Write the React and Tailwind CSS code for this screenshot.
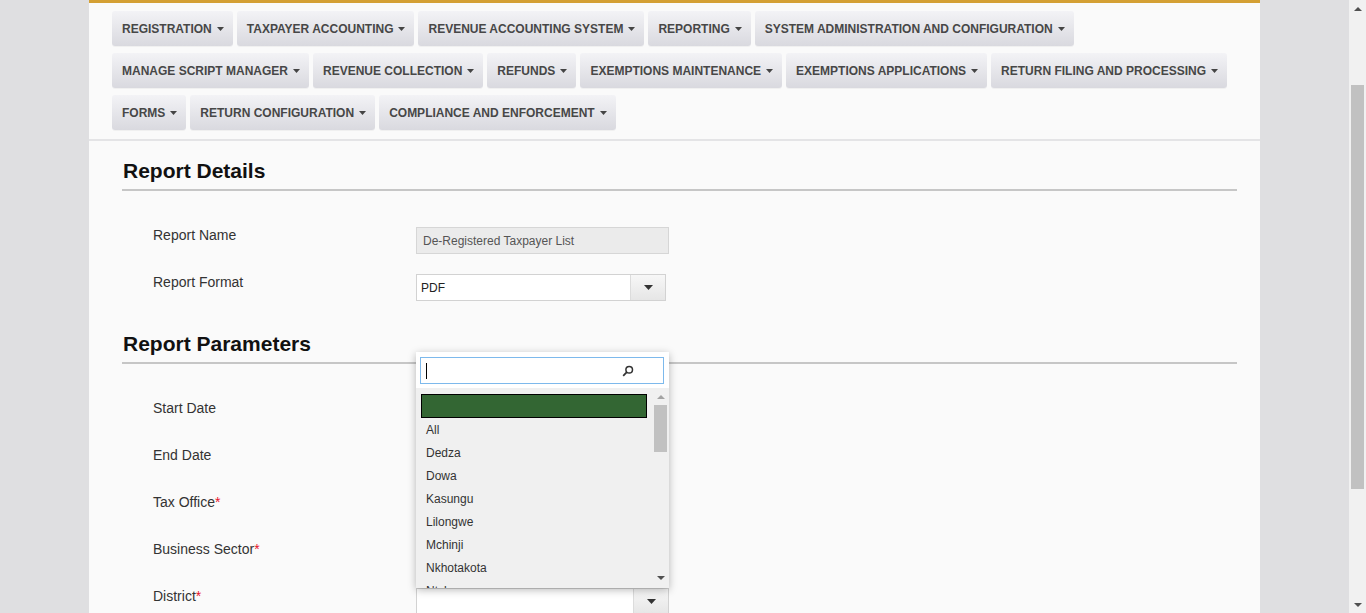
import React from "react";

const navRows = [
  ["REGISTRATION", "TAXPAYER ACCOUNTING", "REVENUE ACCOUNTING SYSTEM", "REPORTING", "SYSTEM ADMINISTRATION AND CONFIGURATION"],
  ["MANAGE SCRIPT MANAGER", "REVENUE COLLECTION", "REFUNDS", "EXEMPTIONS MAINTENANCE", "EXEMPTIONS APPLICATIONS", "RETURN FILING AND PROCESSING"],
  ["FORMS", "RETURN CONFIGURATION", "COMPLIANCE AND ENFORCEMENT"],
];

const districts = ["All", "Dedza", "Dowa", "Kasungu", "Lilongwe", "Mchinji", "Nkhotakota", "Ntcheu"];

function Caret({ w = 7, h = 4, color = "#444" }) {
  return (
    <svg width={w} height={h} viewBox={`0 0 ${w} ${h}`} className="shrink-0">
      <polygon points={`0,0 ${w},0 ${w / 2},${h}`} fill={color} />
    </svg>
  );
}

function NavButton({ label }) {
  return (
    <div className="h-[35px] pl-[10px] pr-[9px] flex items-center gap-[5px] rounded-[3px] bg-gradient-to-b from-[#f3f3f6] to-[#d9d9df] shadow-[0_1px_0_rgba(0,0,0,0.04)]">
      <span className="text-[12px] font-bold text-[#474747] leading-none whitespace-nowrap">{label}</span>
      <Caret />
    </div>
  );
}

function SectionHeading({ children, className = "" }) {
  return (
    <div className={`pb-[6px] border-b-2 border-[#c6c6c6] ${className}`}>
      <h3 className="text-[21px] leading-[24px] font-bold text-[#111] pl-px">{children}</h3>
    </div>
  );
}

function Label({ children, required }) {
  return (
    <div className="w-[263px] shrink-0 text-[14px] leading-[16px] text-[#333]">
      {children}
      {required && <span className="text-[#e8142b]">*</span>}
    </div>
  );
}

function SelectBox({ value = "", width = "w-[253px]" }) {
  return (
    <div className={`${width} h-[27px] flex border border-[#d2d2d2] bg-white`}>
      <div className="flex-1 flex items-center pl-[4px] text-[12px] text-[#222]">{value}</div>
      <div className="w-[35px] h-full flex items-center justify-center border-l border-[#dcdcdc] bg-gradient-to-b from-[#f7f7f7] to-[#e6e6e6]">
        <Caret w={9} h={5} color="#333" />
      </div>
    </div>
  );
}

function Row({ label, required, children }) {
  return (
    <div className="flex items-start h-[27px] mb-[20px]">
      <Label required={required}>{label}</Label>
      <div className="relative">{children}</div>
    </div>
  );
}

function Popup() {
  return (
    <div className="absolute left-0 bottom-full w-[253px] h-[236px] bg-white shadow-[0_2px_8px_rgba(0,0,0,0.28)] flex flex-col z-10">
      <div className="pt-[5px] pl-[4px] pr-[5px] pb-[4px] bg-white">
        <div className="h-[27px] border border-[#7db9ec] flex items-center bg-white">
          <span className="ml-[5px] w-px h-[16px] bg-black" />
          <div className="flex-1" />
          <svg width="12" height="12" viewBox="0 0 12 12" className="mr-[29px]">
            <circle cx="7.2" cy="4.8" r="3.3" fill="none" stroke="#333" strokeWidth="1.5" />
            <line x1="4.8" y1="7.2" x2="1.2" y2="10.8" stroke="#333" strokeWidth="1.8" />
          </svg>
        </div>
      </div>
      <div className="relative flex-1 bg-[#f0f0f0] overflow-hidden">
        <div className="pt-[6px] pl-[5px] pr-[22px]">
          <div className="h-[24px] border border-black bg-[#336633]" />
          {districts.map((d) => (
            <div key={d} className="h-[23px] flex items-center pl-[5px] text-[12px] text-[#333]">
              {d}
            </div>
          ))}
        </div>
        <div className="absolute top-0 bottom-0 right-[1px] w-[15px] flex flex-col items-center">
          <div className="h-[17px] flex items-center justify-center">
            <svg width="8" height="4" viewBox="0 0 8 4"><polygon points="0,4 8,4 4,0" fill="#a3a3a3" /></svg>
          </div>
          <div className="w-[13px] h-[47px] bg-[#c1c1c1]" />
          <div className="flex-1" />
          <div className="h-[20px] flex items-center justify-center">
            <svg width="8" height="4" viewBox="0 0 8 4"><polygon points="0,0 8,0 4,4" fill="#505050" /></svg>
          </div>
        </div>
      </div>
    </div>
  );
}

export default function App() {
  return (
    <div className="h-[613px] w-full flex overflow-hidden bg-[#dfdfe1] font-['Liberation_Sans',Arial,sans-serif]">
      <div className="flex-1 min-w-0 h-full overflow-hidden">
        <div className="w-[1171px] mx-auto h-full bg-[#fafafa] border-t-[3px] border-[#d4a034]">
          <nav className="pt-[8px] pb-[9px] px-[23px] flex flex-col gap-[7px] border-b-2 border-[#e4e4e6]">
            {navRows.map((row, i) => (
              <div key={i} className="flex gap-[4px]">
                {row.map((l) => (
                  <NavButton key={l} label={l} />
                ))}
              </div>
            ))}
          </nav>
          <div className="pl-[33px] pr-[23px]">
            <SectionHeading className="mt-[18px]">Report Details</SectionHeading>
            <div className="pl-[31px] mt-[36px]">
              <Row label="Report Name">
                <div className="w-[253px] h-[27px] border border-[#d6d6d6] bg-[#ebebeb] flex items-center pl-[6px] text-[12px] text-[#555]">
                  De-Registered Taxpayer List
                </div>
              </Row>
              <Row label="Report Format">
                <SelectBox value="PDF" width="w-[250px]" />
              </Row>
            </div>
            <SectionHeading className="mt-[31px]">Report Parameters</SectionHeading>
            <div className="pl-[31px] mt-[36px]">
              <Row label="Start Date">
                <div className="w-[253px] h-[27px] border border-[#d2d2d2] bg-white" />
              </Row>
              <Row label="End Date">
                <div className="w-[253px] h-[27px] border border-[#d2d2d2] bg-white" />
              </Row>
              <Row label="Tax Office" required>
                <SelectBox />
              </Row>
              <Row label="Business Sector" required>
                <SelectBox />
              </Row>
              <Row label="District" required>
                <Popup />
                <SelectBox />
              </Row>
            </div>
          </div>
        </div>
      </div>
      <div className="w-[17px] h-full bg-[#f1f1f1] flex flex-col items-center shrink-0">
        <div className="h-[17px] flex items-center justify-center">
          <svg width="8" height="4" viewBox="0 0 8 4"><polygon points="0,4 8,4 4,0" fill="#505050" /></svg>
        </div>
        <div className="mt-[68px] w-[13px] h-[404px] bg-[#c1c1c1]" />
        <div className="flex-1" />
        <div className="h-[17px] flex items-center justify-center">
          <svg width="8" height="4" viewBox="0 0 8 4"><polygon points="0,0 8,0 4,4" fill="#505050" /></svg>
        </div>
      </div>
    </div>
  );
}
